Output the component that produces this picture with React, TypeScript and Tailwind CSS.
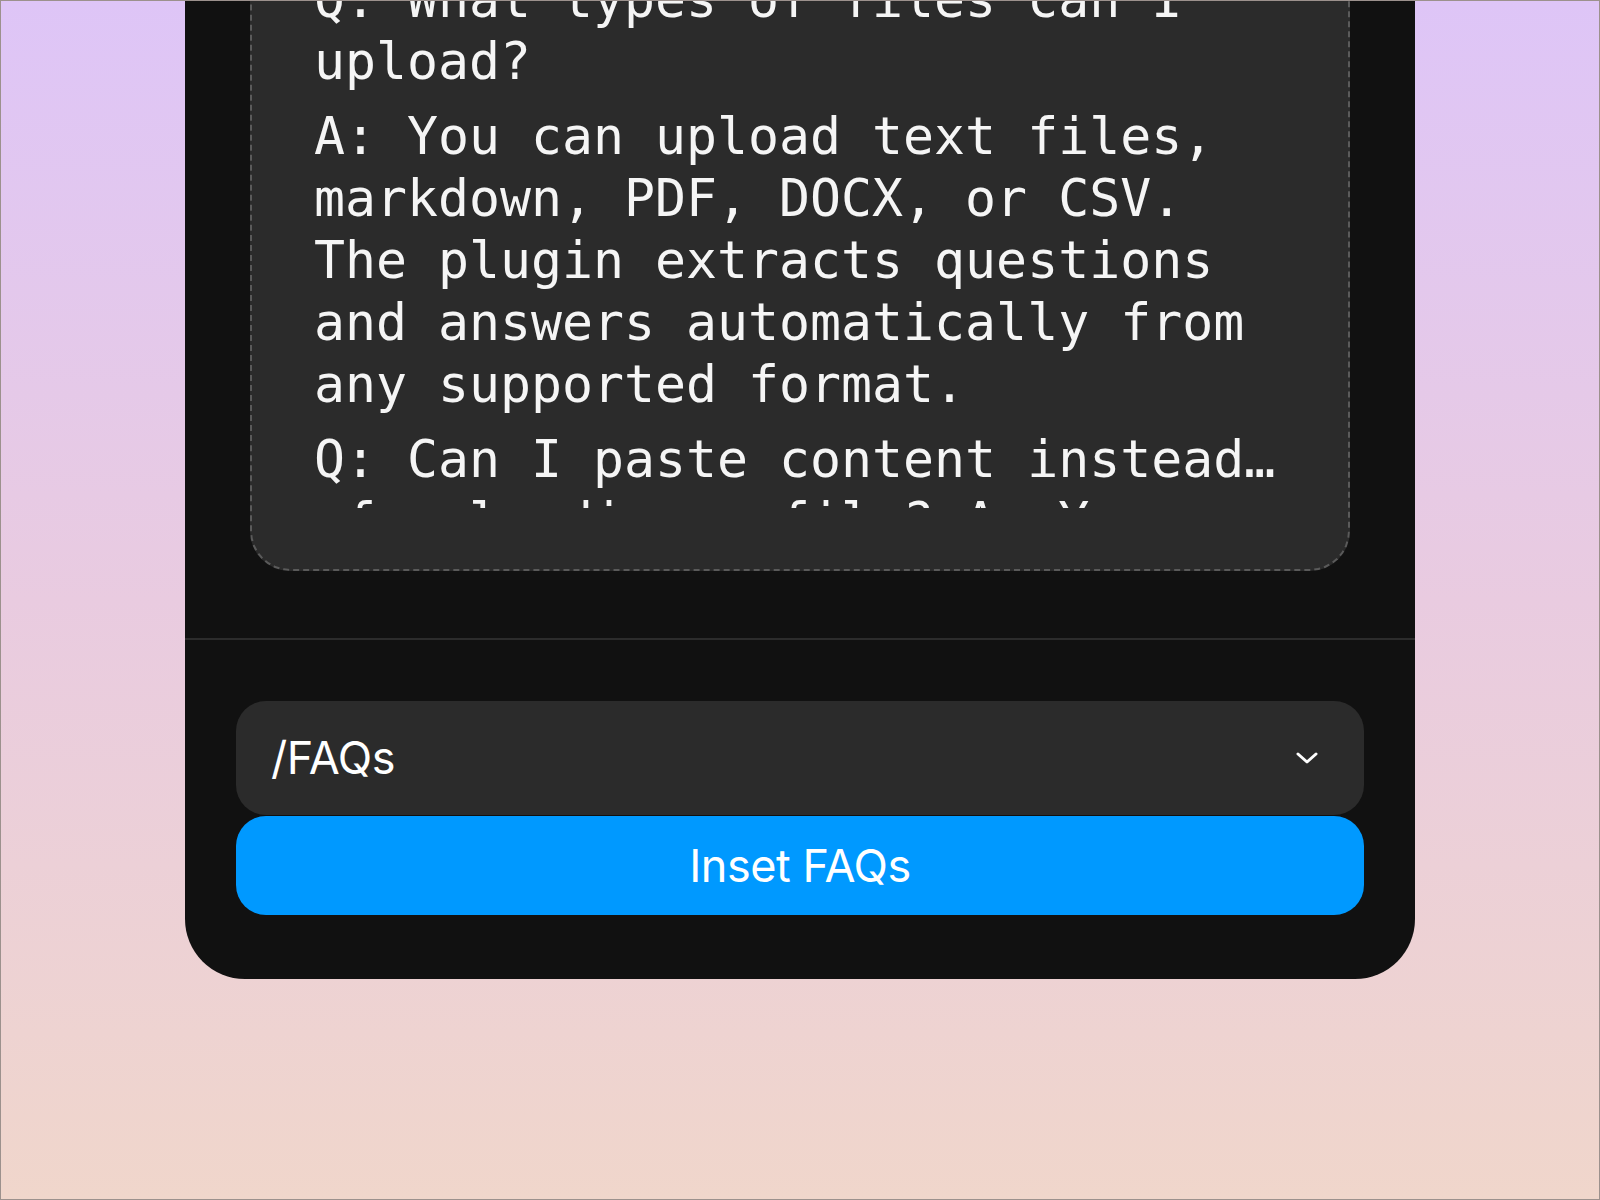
const faqs = [
  { q: "Q: What types of files can I upload?" },
  {
    q: "A: You can upload text files, markdown, PDF, DOCX, or CSV. The plugin extracts questions and answers automatically from any supported format.",
  },
  { q: "Q: Can I paste content instead… of uploading a file? A: Yes, just paste it into the box." },
];

function Chevron() {
  return (
    <svg width="22" height="12" viewBox="0 0 22 12" fill="none">
      <polyline
        points="2,2 11,10 20,2"
        stroke="#ffffff"
        strokeWidth="3"
        strokeLinecap="round"
        strokeLinejoin="round"
      />
    </svg>
  );
}

export default function App() {
  return (
    <div className="flex h-[1200px] w-full justify-center overflow-hidden border border-[#9c918d] bg-gradient-to-b from-[#dec5f7] via-[#e9cbe0] to-[#f0d6cb]">
      <div className="w-[1230px] self-start rounded-b-[60px] bg-[#111111]">
        {/* Preview box */}
        <div className="px-[65px] pb-[67px]">
          <div className="-mt-[80px] rounded-[40px] border-2 border-dashed border-[#5a5a5a] bg-[#2b2b2b] pb-[61px] pl-[62px] pr-[64px] pt-[45px]">
            <div className="h-[540px] overflow-hidden font-['DejaVu_Sans_Mono',monospace] text-[51.5px] leading-[62px] text-[#f5f5f5]">
              {faqs.map((f, i) => (
                <p key={i} className="mb-[13px]">
                  {f.q}
                </p>
              ))}
            </div>
          </div>
        </div>

        <div className="h-[2px] bg-[#2c2c2c]" />

        {/* Controls */}
        <div className="flex flex-col px-[51px] pb-[64px] pt-[61px] font-['Inter',sans-serif]">
          <div className="flex h-[114px] items-center justify-between rounded-[30px] bg-[#2b2b2b] pl-[35px] pr-[46px]">
            <span className="text-[45px] tracking-[-0.01em] text-white">/FAQs</span>
            <Chevron />
          </div>
          <button className="mt-px flex h-[99px] items-center justify-center rounded-[30px] bg-[#0099ff] text-[45px] tracking-[-0.01em] text-white">
            Inset FAQs
          </button>
        </div>
      </div>
    </div>
  );
}
